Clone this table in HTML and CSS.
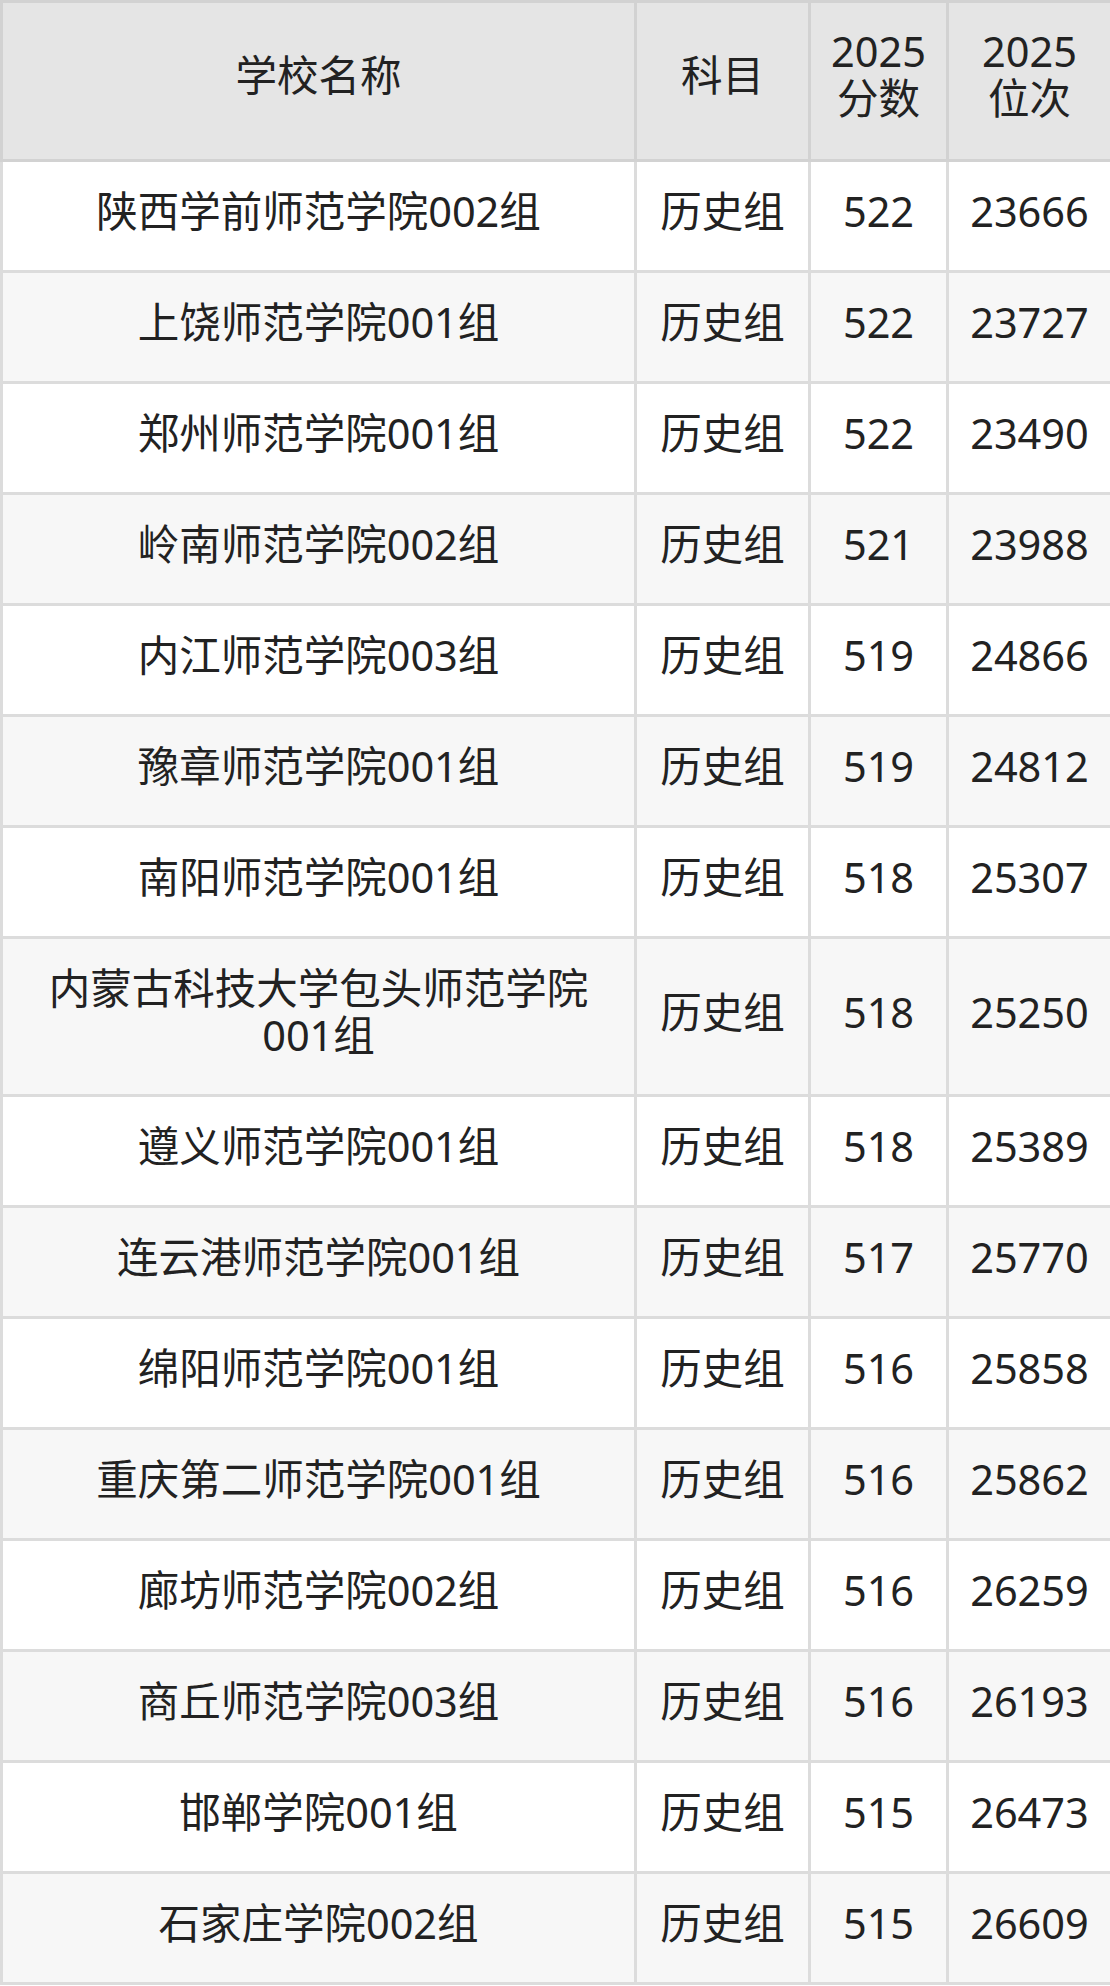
FILE: index.html
```html
<!DOCTYPE html>
<html lang="zh-CN">
<head>
<meta charset="utf-8">
<title>分数位次</title>
<link rel="stylesheet" href="styles.css">
</head>
<body>
<table class="score-table">
  <colgroup>
    <col class="col-name">
    <col class="col-subject">
    <col class="col-score">
    <col class="col-rank">
  </colgroup>
  <thead>
    <tr>
      <th>学校名称</th>
      <th>科目</th>
      <th>2025<br>分数</th>
      <th>2025<br>位次</th>
    </tr>
  </thead>
  <tbody>
    <tr><td>陕西学前师范学院002组</td><td>历史组</td><td>522</td><td>23666</td></tr>
    <tr><td>上饶师范学院001组</td><td>历史组</td><td>522</td><td>23727</td></tr>
    <tr><td>郑州师范学院001组</td><td>历史组</td><td>522</td><td>23490</td></tr>
    <tr><td>岭南师范学院002组</td><td>历史组</td><td>521</td><td>23988</td></tr>
    <tr><td>内江师范学院003组</td><td>历史组</td><td>519</td><td>24866</td></tr>
    <tr><td>豫章师范学院001组</td><td>历史组</td><td>519</td><td>24812</td></tr>
    <tr><td>南阳师范学院001组</td><td>历史组</td><td>518</td><td>25307</td></tr>
    <tr><td>内蒙古科技大学包头师范学院001组</td><td>历史组</td><td>518</td><td>25250</td></tr>
    <tr><td>遵义师范学院001组</td><td>历史组</td><td>518</td><td>25389</td></tr>
    <tr><td>连云港师范学院001组</td><td>历史组</td><td>517</td><td>25770</td></tr>
    <tr><td>绵阳师范学院001组</td><td>历史组</td><td>516</td><td>25858</td></tr>
    <tr><td>重庆第二师范学院001组</td><td>历史组</td><td>516</td><td>25862</td></tr>
    <tr><td>廊坊师范学院002组</td><td>历史组</td><td>516</td><td>26259</td></tr>
    <tr><td>商丘师范学院003组</td><td>历史组</td><td>516</td><td>26193</td></tr>
    <tr><td>邯郸学院001组</td><td>历史组</td><td>515</td><td>26473</td></tr>
    <tr><td>石家庄学院002组</td><td>历史组</td><td>515</td><td>26609</td></tr>
  </tbody>
</table>
</body>
</html>
```
FILE: styles.css
```css
html, body {
  margin: 0;
  padding: 0;
  background: #ffffff;
}

.score-table {
  width: 1110px;
  table-layout: fixed;
  border-collapse: collapse;
  font-family: "Noto Sans", "Noto Sans CJK SC", sans-serif;
  font-size: 41.5px;
  line-height: 47px;
  color: #222222;
}

.col-name { width: 634px; }
.col-subject { width: 174px; }
.col-score { width: 138px; }
.col-rank { width: 164px; }

.score-table th,
.score-table td {
  border: 3px solid #dcdcdc;
  padding: 26px 16px 35px;
  text-align: center;
  vertical-align: middle;
  font-weight: normal;
}

.score-table thead th {
  background: #e5e5e5;
  border-color: #d2d2d2;
  padding-top: 25px;
  padding-bottom: 37px;
}

.score-table tbody tr:nth-child(even) td {
  background: #f7f7f7;
}
```
